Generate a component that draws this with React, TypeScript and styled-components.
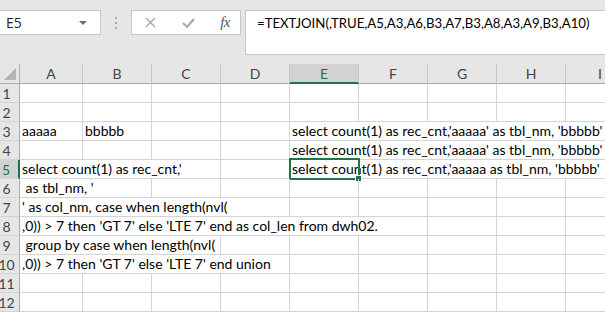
import React from "react";
import styled, { createGlobalStyle, css } from "styled-components";

const GlobalStyle = createGlobalStyle`
  html, body {
    margin: 0;
    padding: 0;
    background: #ffffff;
    overflow: hidden;
  }
  body {
    font-family: Lato, "Liberation Sans", sans-serif;
  }
`;

const Window = styled.div`
  width: 605px;
  height: 312px;
  overflow: hidden;
  background: #ffffff;
`;

const FormulaArea = styled.div`
  height: 64px;
  box-sizing: border-box;
  background: #e6e6e6;
  display: flex;
  align-items: flex-start;
  padding-top: 10px;
`;

const NameBox = styled.div`
  width: 101px;
  height: 25px;
  box-sizing: border-box;
  background: #fff;
  border: 1px solid #c6c6c6;
  border-left: none;
  display: flex;
  align-items: center;
  justify-content: space-between;
  padding: 0 13px 0 6px;
  font-family: "Open Sans", sans-serif;
  font-size: 14px;
  color: #222;
`;

const Caret = styled.span`
  width: 0;
  height: 0;
  border-left: 4px solid transparent;
  border-right: 4px solid transparent;
  border-top: 4px solid #6a6a6a;
`;

const Grip = styled.div`
  width: 30px;
  height: 25px;
  display: flex;
  flex-direction: column;
  align-items: center;
  justify-content: center;
  gap: 3px;

  span {
    width: 2px;
    height: 2px;
    background: #a6a6a6;
  }
`;

const FxBox = styled.div`
  width: 110px;
  height: 25px;
  box-sizing: border-box;
  background: #fff;
  border: 1px solid #c6c6c6;
  display: flex;
  align-items: center;
  justify-content: space-between;
  padding: 0 10px 0 13px;
`;

const FxLabel = styled.span`
  font-family: "Liberation Serif", serif;
  font-style: italic;
  font-size: 15px;
  color: #555;
  letter-spacing: -0.5px;
`;

const FormulaInput = styled.div`
  flex: 1;
  margin-left: 4px;
  height: 45px;
  box-sizing: border-box;
  background: #fff;
  border: 1px solid #c6c6c6;
  border-right: none;
  padding: 4px 0 0 11px;
  font-size: 13.2px;
  color: #000;
  white-space: nowrap;
  overflow: hidden;
`;

const Sheet = styled.div`
  display: grid;
  grid-template-columns: 20px 63px repeat(8, 69px);
  grid-template-rows: 20px;
  grid-auto-rows: 19px;
  width: 635px;
`;

const headerBase = css`
  box-sizing: border-box;
  background: #e6e6e6;
  color: #444;
  font-size: 14px;
  display: flex;
  align-items: center;
  justify-content: center;
`;

const Corner = styled.div`
  ${headerBase};
  position: relative;
  border-right: 1px solid #ababab;
  border-bottom: 1px solid #ababab;

  &::after {
    content: "";
    position: absolute;
    right: 3px;
    bottom: 3px;
    width: 0;
    height: 0;
    border-left: 12px solid transparent;
    border-bottom: 12px solid #b4b4b4;
  }
`;

const ColHeader = styled.div<{ $active?: boolean }>`
  ${headerBase};
  border-right: 1px solid #c6c6c6;
  border-bottom: 1px solid #ababab;
  ${(p) =>
    p.$active &&
    css`
      background: #d2d2d2;
      color: #217346;
      border-bottom: 2px solid #217346;
    `}
`;

const RowHeader = styled.div<{ $active?: boolean }>`
  ${headerBase};
  padding-right: 6px;
  border-right: 1px solid #ababab;
  border-bottom: 1px solid #d4d4d4;
  ${(p) =>
    p.$active &&
    css`
      background: #d2d2d2;
      color: #217346;
      border-right: 2px solid #217346;
    `}
`;

const Cell = styled.div<{ $span: number }>`
  grid-column: span ${(p) => p.$span};
  position: relative;
  box-sizing: border-box;
  border-right: 1px solid #d4d4d4;
  border-bottom: 1px solid #d4d4d4;
  font-size: 14px;
  line-height: 18px;
  color: #000;
  padding-left: 2px;
  white-space: pre;
  overflow: visible;
`;

const Selection = styled.div`
  position: absolute;
  left: -1px;
  top: -2px;
  width: 71px;
  height: 22px;
  box-sizing: border-box;
  border: 2px solid #217346;
  pointer-events: none;

  &::after {
    content: "";
    position: absolute;
    right: -4px;
    bottom: -4px;
    width: 5px;
    height: 5px;
    background: #217346;
    border: 1px solid #fff;
  }
`;

type CellData = { text?: string; span?: number; selected?: boolean };

const columns = ["A", "B", "C", "D", "E", "F", "G", "H", "I"];

const sqlE = "select count(1) as rec_cnt,'aaaaa' as tbl_nm, 'bbbbb'";

const rows: CellData[][] = [
  [],
  [],
  [{ text: "aaaaa" }, { text: "bbbbb" }, {}, {}, { text: sqlE, span: 5 }],
  [{}, {}, {}, {}, { text: sqlE, span: 5 }],
  [
    { text: "select count(1) as rec_cnt,'", span: 3 },
    {},
    { text: "select count(1) as rec_cnt,'aaaaa as tbl_nm, 'bbbbb'", span: 5, selected: true },
  ],
  [{ text: " as tbl_nm, '", span: 2 }],
  [{ text: "' as col_nm, case when length(nvl(", span: 4 }],
  [{ text: ",0)) > 7 then 'GT 7' else 'LTE 7' end as col_len from dwh02.", span: 6 }],
  [{ text: " group by case when length(nvl(", span: 3 }],
  [{ text: ",0)) > 7 then 'GT 7' else 'LTE 7' end union", span: 4 }],
  [],
  [],
];

// pad each row with empty cells up to column I
const fillRow = (cells: CellData[]) => {
  const out = [...cells];
  let used = out.reduce((n, c) => n + (c.span ?? 1), 0);
  while (used < columns.length) {
    out.push({});
    used++;
  }
  return out;
};

const CancelIcon = () => (
  <svg width="11" height="11" viewBox="0 0 11 11">
    <path d="M1 1 L10 10 M10 1 L1 10" stroke="#a6a6a6" strokeWidth="1.3" fill="none" />
  </svg>
);

const EnterIcon = () => (
  <svg width="13" height="10" viewBox="0 0 13 10">
    <path d="M1 5 L5 9 L12 1" stroke="#a6a6a6" strokeWidth="2" fill="none" />
  </svg>
);

const App: React.FC = () => {
  return (
    <Window>
      <GlobalStyle />
      <FormulaArea>
        <NameBox>
          <span>E5</span>
          <Caret />
        </NameBox>
        <Grip>
          <span />
          <span />
          <span />
        </Grip>
        <FxBox>
          <CancelIcon />
          <EnterIcon />
          <FxLabel>fx</FxLabel>
        </FxBox>
        <FormulaInput>=TEXTJOIN(,TRUE,A5,A3,A6,B3,A7,B3,A8,A3,A9,B3,A10)</FormulaInput>
      </FormulaArea>
      <Sheet>
        <Corner />
        {columns.map((c) => (
          <ColHeader key={c} $active={c === "E"}>
            {c}
          </ColHeader>
        ))}
        {rows.map((r, i) => (
          <React.Fragment key={i}>
            <RowHeader $active={i === 4}>{i + 1}</RowHeader>
            {fillRow(r).map((cell, j) => (
              <Cell key={j} $span={cell.span ?? 1}>
                {cell.text}
                {cell.selected && <Selection />}
              </Cell>
            ))}
          </React.Fragment>
        ))}
      </Sheet>
    </Window>
  );
};

export default App;
